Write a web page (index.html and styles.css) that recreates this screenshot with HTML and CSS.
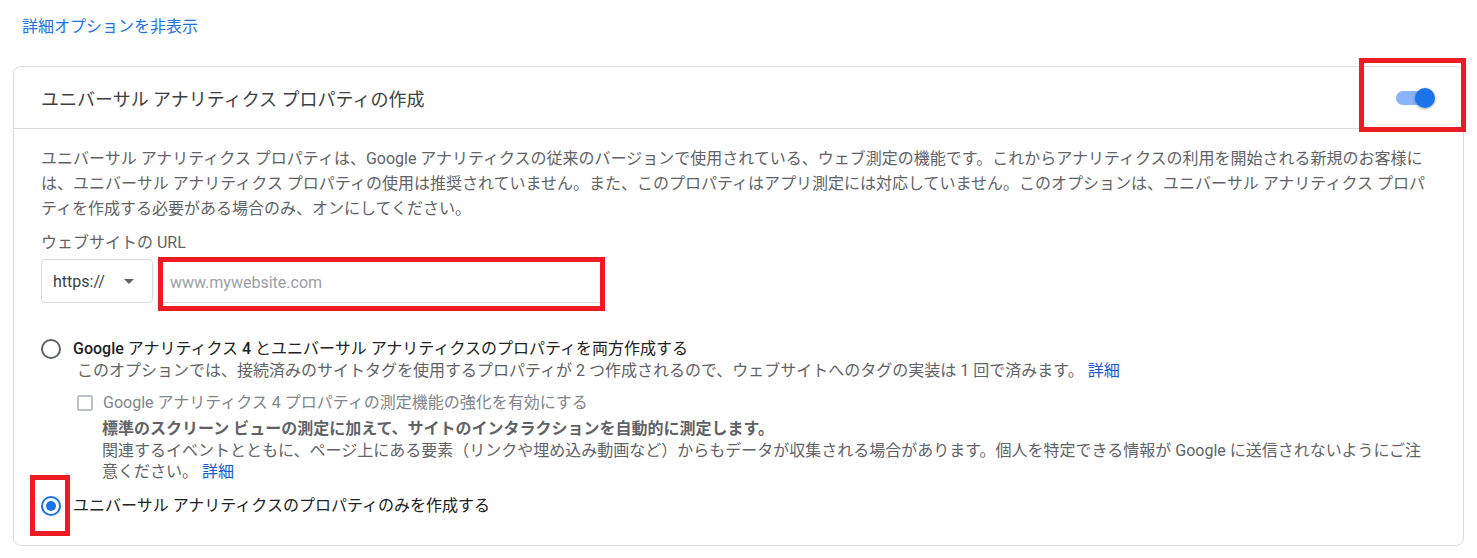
FILE: index.html
```html
<!DOCTYPE html>
<html lang="ja">
<head>
    <meta charset="UTF-8">
    <meta name="viewport" content="width=device-width, initial-scale=1.0">
    <title>ユニバーサル アナリティクス プロパティの作成</title>
    <link rel="stylesheet" href="styles.css">
</head>
<body>

    <div class="page">
        <a class="advanced-link" href="#">詳細オプションを非表示</a>

        <section class="card">
            <div class="card-head">
                <h2>ユニバーサル アナリティクス プロパティの作成</h2>
                <div class="switch-wrap">
                    <span class="switch"><span class="knob"></span></span>
                    <span class="mark mark-switch"></span>
                </div>
            </div>

            <div class="card-body">
                <p class="desc">ユニバーサル アナリティクス プロパティは、Google アナリティクスの従来のバージョンで使用されている、ウェブ測定の機能です。これからアナリティクスの利用を開始される新規のお客様には、ユニバーサル アナリティクス プロパティの使用は推奨されていません。また、このプロパティはアプリ測定には対応していません。このオプションは、ユニバーサル アナリティクス プロパティを作成する必要がある場合のみ、オンにしてください。</p>

                <div class="field-label">ウェブサイトの URL</div>
                <div class="url-row">
                    <div class="select">https://<span class="caret"></span></div>
                    <div class="url-input">
                        <input type="text" placeholder="www.mywebsite.com">
                        <span class="mark mark-input"></span>
                    </div>
                </div>

                <div class="option">
                    <span class="radio"></span>
                    <span class="option-label"><span class="latin">Google</span> アナリティクス <span class="latin">4</span> とユニバーサル アナリティクスのプロパティを両方作成する</span>
                </div>
                <div class="option-sub">
                    <div class="sub-text">このオプションでは、接続済みのサイトタグを使用するプロパティが 2 つ作成されるので、ウェブサイトへのタグの実装は 1 回で済みます。 <a href="#">詳細</a></div>
                    <div class="check-row">
                        <span class="checkbox"></span>
                        <span class="check-label">Google アナリティクス 4 プロパティの測定機能の強化を有効にする</span>
                    </div>
                    <div class="check-detail">
                        <div class="check-title">標準のスクリーン ビューの測定に加えて、サイトのインタラクションを自動的に測定します。</div>
                        <div class="check-desc">関連するイベントとともに、ページ上にある要素（リンクや埋め込み動画など）からもデータが収集される場合があります。個人を特定できる情報が Google に送信されないようにご注意ください。 <a href="#">詳細</a></div>
                    </div>
                </div>

                <div class="option option-last">
                    <span class="radio-wrap">
                        <span class="radio checked"></span>
                        <span class="mark mark-radio"></span>
                    </span>
                    <span class="option-label">ユニバーサル アナリティクスのプロパティのみを作成する</span>
                </div>
            </div>
        </section>
    </div>

</body>
</html>
```

FILE: styles.css
```css
body {
    margin: 0;
    background: #fff;
    font-family: Roboto, "Noto Sans CJK JP", sans-serif;
    font-size: 16px;
    color: #202124;
}
a {
    text-decoration: none;
}
.page {
    padding: 17px 13px 0;
}
.advanced-link {
    display: inline-block;
    margin-left: 9px;
    line-height: 20px;
    color: #1a73e8;
}
.card {
    margin-top: 29px;
    border: 1px solid #dadce0;
    border-radius: 8px;
}
.card-head {
    height: 61px;
    display: flex;
    align-items: center;
    justify-content: space-between;
    padding: 0 28px 0 27px;
    border-bottom: 1px solid #dadce0;
}
.card-head h2 {
    margin: 0;
    font-size: 18px;
    font-weight: 400;
    color: #3c4043;
}
.switch-wrap {
    position: relative;
    width: 39px;
    height: 20px;
    display: flex;
    align-items: center;
}
.switch {
    position: relative;
    width: 34px;
    height: 14px;
    border-radius: 7px;
    background: #8ab4f8;
}
.knob {
    position: absolute;
    right: -5px;
    top: -3px;
    width: 20px;
    height: 20px;
    border-radius: 50%;
    background: #1a73e8;
    box-shadow: 0 1px 3px rgba(0, 0, 0, 0.35);
}
.mark {
    position: absolute;
    border: 5px solid #ed1c24;
    pointer-events: none;
}
.mark-switch {
    top: -30px;
    bottom: -24px;
    left: -37px;
    right: -31px;
}
.card-body {
    padding: 17px 27px 28px;
}
.desc {
    margin: 0;
    line-height: 25px;
    color: #5f6368;
}
.field-label {
    margin-top: 12px;
    line-height: 20px;
    color: #5f6368;
}
.url-row {
    margin-top: 6px;
    display: flex;
    gap: 10px;
}
.select {
    box-sizing: border-box;
    width: 112px;
    height: 44px;
    border: 1px solid #dadce0;
    border-radius: 4px;
    display: flex;
    align-items: center;
    justify-content: space-between;
    padding: 0 18px 0 11px;
    color: #3c4043;
}
.caret {
    width: 0;
    height: 0;
    border-left: 5px solid transparent;
    border-right: 5px solid transparent;
    border-top: 5px solid #5f6368;
}
.url-input {
    position: relative;
    width: 437px;
    height: 41px;
    margin-top: 3px;
}
.url-input input {
    box-sizing: border-box;
    width: 100%;
    height: 100%;
    border: none;
    border-bottom: 1px solid #dadce0;
    padding: 0 7px;
    font: inherit;
    color: #202124;
    outline: none;
}
.url-input input::placeholder {
    color: #9aa0a6;
}
.mark-input {
    top: -5px;
    left: -5px;
    right: -5px;
    bottom: -8px;
}
.option {
    margin-top: 36px;
    display: flex;
    align-items: flex-start;
    gap: 12px;
    line-height: 20px;
}
.radio {
    box-sizing: border-box;
    flex: none;
    width: 20px;
    height: 20px;
    border: 2px solid #5f6368;
    border-radius: 50%;
    display: flex;
    align-items: center;
    justify-content: center;
}
.radio.checked {
    border-color: #1a73e8;
}
.radio.checked::after {
    content: "";
    width: 10px;
    height: 10px;
    border-radius: 50%;
    background: #1a73e8;
}
.latin {
    font-weight: 500;
}
.option-sub {
    margin-left: 36px;
}
.sub-text {
    margin-top: 1px;
    line-height: 22px;
    color: #5f6368;
}
.sub-text a,
.check-desc a {
    color: #1558d6;
}
.check-row {
    margin-top: 11px;
    display: flex;
    align-items: center;
    gap: 10px;
    line-height: 20px;
}
.checkbox {
    box-sizing: border-box;
    width: 16px;
    height: 16px;
    border: 2px solid #bdc1c6;
    border-radius: 2px;
}
.check-label {
    color: #80868b;
}
.check-detail {
    padding-left: 25px;
}
.check-title {
    margin-top: 5px;
    line-height: 22px;
    font-weight: 700;
    color: #5f6368;
}
.check-desc {
    line-height: 21px;
    color: #5f6368;
}
.option-last {
    margin-top: 13px;
    line-height: 22px;
}
.radio-wrap {
    position: relative;
    margin-top: 1px;
}
.mark-radio {
    top: -21px;
    bottom: -20px;
    left: -11px;
    right: -9px;
}
```
